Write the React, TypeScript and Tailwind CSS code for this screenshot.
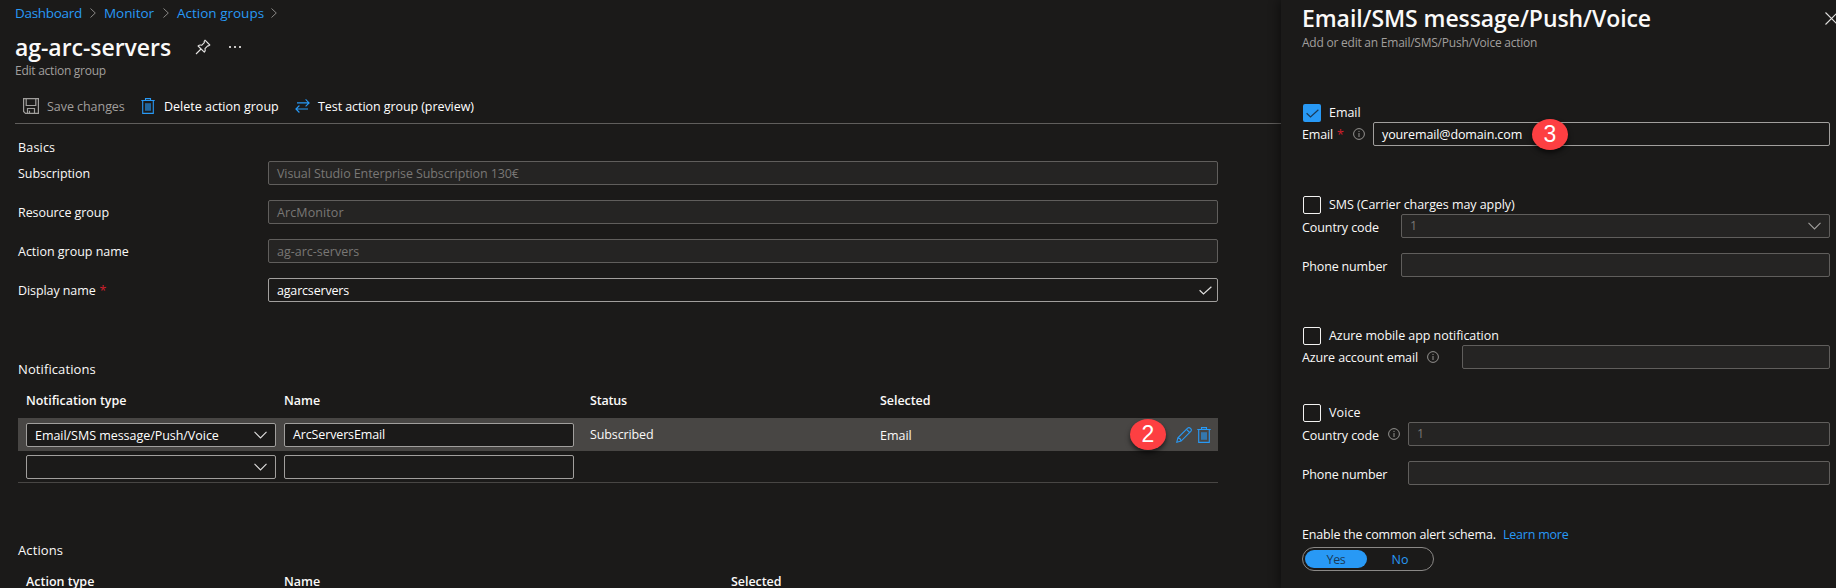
import type { ReactNode } from "react";

function ChevronRight() {
  return (
    <svg className="h-[10px] w-[6px]" viewBox="0 0 6 10" fill="none" stroke="#8a8886" strokeWidth="1">
      <path d="M0.5 0.5 5.3 5 0.5 9.5" />
    </svg>
  );
}

function ChevronDown({ className = "text-[#e0dfde]" }: { className?: string }) {
  return (
    <svg className={`h-[8px] w-[13px] shrink-0 ${className}`} viewBox="0 0 13 8" fill="none" stroke="currentColor" strokeWidth="1.1">
      <path d="M0.5 0.8 6.5 6.9 12.5 0.8" />
    </svg>
  );
}

function Pin() {
  return (
    <svg className="h-[16px] w-[16px]" viewBox="0 0 16 16" fill="none" stroke="#e6e5e4" strokeWidth="1.1" strokeLinejoin="round">
      <path d="M10 1.2 14.8 6l-1.2.9-.9-.1-2.7 2.8c.5 1.3.2 2.6-.7 3.5L3.1 7c1-.9 2.3-1.2 3.5-.7l2.7-2.7-.1-1.2z" />
      <path d="M6 10 1 15" />
    </svg>
  );
}

function Save() {
  return (
    <svg className="h-[16px] w-[16px]" viewBox="0 0 16 16" fill="none" stroke="#a19f9d" strokeWidth="1.2">
      <path d="M.6.6h14.8v14.8H2.5L.6 13.5z" />
      <path d="M3.2.6v6.9h9.6V.6M4.5 15.4v-4.9h7v4.9M6.5 15.4v-2.6" />
    </svg>
  );
}

function Trash() {
  return (
    <svg className="h-[16px] w-[14px] shrink-0" viewBox="0 0 14 16" fill="none" stroke="#2899f5" strokeWidth="1.1">
      <path d="M4 5.2h6v7.6H4z" fill="#2899f5" fillOpacity="0.6" stroke="none" />
      <path d="M.3 2.5h13.4M4.5 2.4V.6h5v1.8M1.7 2.5v12.9h10.6V2.5" />
    </svg>
  );
}

function Swap() {
  return (
    <svg className="h-[14px] w-[15px]" viewBox="0 0 15 14" fill="none" stroke="#2899f5" strokeWidth="1.1">
      <path d="M2 3.9h12M10.6.4 14.1 3.9l-3.5 3.5M13 10H1M4.4 6.5.9 10l3.5 3.5" />
    </svg>
  );
}

function Pencil() {
  return (
    <svg className="h-[16px] w-[16px] shrink-0" viewBox="0 0 16 16" fill="none" stroke="#2899f5" strokeWidth="1.1">
      <path d="M.8 15.2 1.9 10.9 11.6 1.2c1.9-1.7 4.9 1.2 3.2 3.2L5.1 14.1z" />
      <path d="M1.9 10.9c1.6.2 2.9 1.4 3.2 3.2M10.5 2.3l3.2 3.2" />
    </svg>
  );
}

function Check({ className }: { className: string }) {
  return (
    <svg className={`h-[9px] w-[13px] shrink-0 ${className}`} viewBox="0 0 13 9" fill="none" stroke="currentColor" strokeWidth="1.2">
      <path d="M.6 4.2 4.5 8 12.4.7" />
    </svg>
  );
}

function Info() {
  return (
    <svg className="h-[12px] w-[12px] shrink-0" viewBox="0 0 12 12" fill="none" stroke="#a19f9d" strokeWidth="0.9">
      <circle cx="6" cy="6" r="5.4" />
      <path d="M6 5v4M6 2.9V4" />
    </svg>
  );
}

function Field({ className = "", disabled, children }: { className?: string; disabled?: boolean; children?: ReactNode }) {
  const look = disabled ? "border-[#605e5c] bg-[#252423] text-[#797775]" : "border-[#a19f9d] bg-[#1b1a19] text-white";
  return <div className={`flex h-6 items-center rounded-[2px] border px-2 ${look} ${className}`}>{children}</div>;
}

function Badge({ className, children }: { className: string; children: ReactNode }) {
  return (
    <span className={`absolute flex h-[31px] w-[36px] items-center justify-center rounded-[50%] bg-[#fd3f42] font-['Liberation_Sans',sans-serif] text-[23px] leading-none text-white shadow-[0_3px_5px_rgba(0,0,0,0.6)] ${className}`}>
      {children}
    </span>
  );
}

function FormRow({ label, tracking, children }: { label: ReactNode; tracking: string; children: ReactNode }) {
  return (
    <div className="flex h-6 items-center">
      <span className={`w-[250px] pt-[2px] ${tracking}`}>{label}</span>
      {children}
    </div>
  );
}

function CheckRow({ label, checked, tracking }: { label: string; checked?: boolean; tracking: string }) {
  return (
    <div className="flex h-[18px] gap-2 pl-px">
      <span className={`flex size-[18px] items-center justify-center rounded-[2px] ${checked ? "bg-[#2899f5]" : "border border-[#f3f2f1]"}`}>
        {checked && <Check className="text-[#1b3a57]" />}
      </span>
      <span className={`pt-px leading-4 ${tracking}`}>{label}</span>
    </div>
  );
}

const Star = () => <span className="ml-1 text-[#d01f2c]">*</span>;

export default function App() {
  return (
    <div className="flex h-[588px] w-[1836px] overflow-hidden bg-[#1b1a19] font-['Open_Sans','Noto_Sans',sans-serif] text-[12.5px] leading-4 whitespace-nowrap text-[#faf9f8]">
      <main className="flex w-[1281px] shrink-0 flex-col [&>*]:shrink-0">
        <nav className="flex h-[26px] items-center gap-[8px] pl-[15px] text-[13.5px] text-[#2899f5]">
          <span className="w-[67px] tracking-[-0.3px]">Dashboard</span>
          <ChevronRight />
          <span className="w-[51px] tracking-[-0.06px]">Monitor</span>
          <ChevronRight />
          <span className="w-[86px]">Action groups</span>
          <ChevronRight />
        </nav>
        <div className="mt-[5px] flex h-8 items-center pl-[15px]">
          <h1 className="w-[180px] text-[23px] font-semibold tracking-[-0.04px]">ag-arc-servers</h1>
          <Pin />
          <span className="ml-[18px] flex gap-[3px]">
            <i className="size-[2px] bg-[#c8c6c4]" />
            <i className="size-[2px] bg-[#c8c6c4]" />
            <i className="size-[2px] bg-[#c8c6c4]" />
          </span>
        </div>
        <p className="pl-[15px] text-[12px] tracking-[-0.25px] text-[#a19f9d]">Edit action group</p>
        <div className="mt-[10px] ml-[15px] flex h-[35px] items-center border-b border-[#605e5c] pl-2">
          <Save />
          <span className="mt-[2px] ml-[8px] w-[94px] tracking-[-0.05px] text-[#a19f9d]">Save changes</span>
          <Trash />
          <span className="mt-[2px] ml-[9px] w-[131px] text-white">Delete action group</span>
          <Swap />
          <span className="mt-[2px] ml-[8px] tracking-[-0.07px] text-white">Test action group (preview)</span>
        </div>

        <section className="mt-[16px] w-[1218px] pl-[18px]">
          <h2 className="tracking-[0.2px]">Basics</h2>
          <div className="mt-[5px] flex flex-col gap-[15px]">
            <FormRow label="Subscription" tracking="tracking-[-0.07px]">
              <Field disabled className="flex-1"><span className="pt-[2px] tracking-[-0.1px]">Visual Studio Enterprise Subscription 130€</span></Field>
            </FormRow>
            <FormRow label="Resource group" tracking="tracking-[-0.07px]">
              <Field disabled className="flex-1"><span className="pt-px tracking-[0.1px]">ArcMonitor</span></Field>
            </FormRow>
            <FormRow label="Action group name" tracking="tracking-[-0.02px]">
              <Field disabled className="flex-1"><span className="pt-[2px]">ag-arc-servers</span></Field>
            </FormRow>
            <FormRow label={<>Display name<Star /></>} tracking="tracking-[-0.09px]">
              <Field className="flex-1 justify-between !pr-[5px]">
                <span className="pt-[2px] tracking-[-0.18px]">agarcservers</span>
                <Check className="text-[#e0dfde]" />
              </Field>
            </FormRow>
          </div>
        </section>

        <section className="mt-[59px] ml-[18px] w-[1200px]">
          <h2 className="text-[13px] tracking-[0.1px]">Notifications</h2>
          <div className="mt-[16px] flex pl-[8px] font-semibold">
            <span className="w-[258px] tracking-[-0.05px]">Notification type</span>
            <span className="w-[306px]">Name</span>
            <span className="w-[290px] tracking-[-0.17px]">Status</span>
            <span className="tracking-[-0.05px]">Selected</span>
          </div>
          <div className="relative mt-[9px] flex h-[33px] items-center bg-[#484644] pr-[7px] pl-2">
            <Field className="w-[250px] justify-between">
              <span className="pt-[2px] tracking-[-0.04px]">Email/SMS message/Push/Voice</span>
              <ChevronDown />
            </Field>
            <Field className="ml-2 w-[290px]"><span className="tracking-[-0.14px]">ArcServersEmail</span></Field>
            <span className="ml-[16px] w-[290px] tracking-[-0.12px]">Subscribed</span>
            <span className="flex-1 pt-[2px]">Email</span>
            <Badge className="top-[1px] left-[1112px]">2</Badge>
            <Pencil />
            <span className="ml-[5px] flex"><Trash /></span>
          </div>
          <div className="flex h-8 border-b border-[#484644] pt-1 pl-2">
            <Field className="w-[250px] justify-end"><ChevronDown /></Field>
            <Field className="ml-2 w-[290px]" />
          </div>
        </section>

        <section className="mt-[59px] ml-[18px] w-[1200px]">
          <h2 className="text-[13px] tracking-[0.1px]">Actions</h2>
          <div className="mt-[16px] flex pl-[8px] font-semibold">
            <span className="w-[258px]">Action type</span>
            <span className="w-[447px]">Name</span>
            <span className="tracking-[-0.05px]">Selected</span>
          </div>
        </section>
      </main>

      <aside className="flex min-w-0 flex-1 flex-col bg-[#1b1a19] pt-[2px] pr-[6px] pl-[21px] shadow-[-2px_0_10px_rgba(0,0,0,0.45)]">
        <div className="relative -mr-[6px] flex h-8 items-center justify-between">
          <h1 className="text-[23px] font-semibold tracking-[-0.08px]">Email/SMS message/Push/Voice</h1>
          <svg className="mr-[-2px] h-[13px] w-[13px]" viewBox="0 0 13 13" stroke="#e0dfde" strokeWidth="1.1">
            <path d="M.5.5l12 12M12.5.5l-12 12" />
          </svg>
        </div>
        <p className="mt-px text-[12px] tracking-[-0.23px] text-[#a19f9d]">Add or edit an Email/SMS/Push/Voice action</p>

        <section className="mt-[53px]">
          <CheckRow label="Email" checked tracking="tracking-[-0.06px]" />
          <div className="relative flex h-6 items-center">
            <span className="w-[51px] pt-[2px] tracking-[-0.15px]">Email<Star /></span>
            <Info />
            <Field className="ml-[8px] flex-1"><span className="pt-px tracking-[-0.12px]">youremail@domain.com</span></Field>
            <Badge className="top-[-3px] left-[230px]">3</Badge>
          </div>
        </section>

        <section className="mt-[50px]">
          <CheckRow label="SMS (Carrier charges may apply)" tracking="tracking-[-0.06px]" />
          <div className="flex h-6 items-center">
            <span className="w-[99px] pt-[3px] tracking-[-0.08px]">Country code</span>
            <Field disabled className="flex-1 justify-between"><span>1</span><ChevronDown className="text-[#a19f9d]" /></Field>
          </div>
          <div className="mt-[15px] flex h-6 items-center">
            <span className="w-[99px] pt-[3px] tracking-[-0.18px]">Phone number</span>
            <Field disabled className="flex-1" />
          </div>
        </section>

        <section className="mt-[50px]">
          <CheckRow label="Azure mobile app notification" tracking="tracking-[-0.06px]" />
          <div className="flex h-6 items-center">
            <span className="w-[125px] pt-[2px] tracking-[-0.11px]">Azure account email</span>
            <Info />
            <Field disabled className="ml-[23px] flex-1" />
          </div>
        </section>

        <section className="mt-[35px]">
          <CheckRow label="Voice" tracking="tracking-[0.1px]" />
          <div className="flex h-6 items-center">
            <span className="w-[86px] pt-[3px] tracking-[-0.08px]">Country code</span>
            <Info />
            <Field disabled className="ml-[8px] flex-1">1</Field>
          </div>
          <div className="mt-[15px] flex h-6 items-center">
            <span className="w-[106px] pt-[3px] tracking-[-0.18px]">Phone number</span>
            <Field disabled className="flex-1" />
          </div>
        </section>

        <section className="mt-[42px]">
          <p className="flex">
            <span className="w-[201px] tracking-[-0.15px]">Enable the common alert schema.</span>
            <a className="tracking-[-0.22px] text-[#2899f5]">Learn more</a>
          </p>
          <div className="mt-[4px] flex h-6 w-[132px] items-center rounded-full border border-[#8a8886] px-[2px]">
            <span className="flex h-[18px] w-[62px] items-center justify-center rounded-full bg-[#2899f5] pt-px tracking-[-0.32px] text-[#1b3a57]">Yes</span>
            <span className="flex-1 pt-px pl-[2px] text-center text-[#2899f5]">No</span>
          </div>
        </section>
      </aside>
    </div>
  );
}
